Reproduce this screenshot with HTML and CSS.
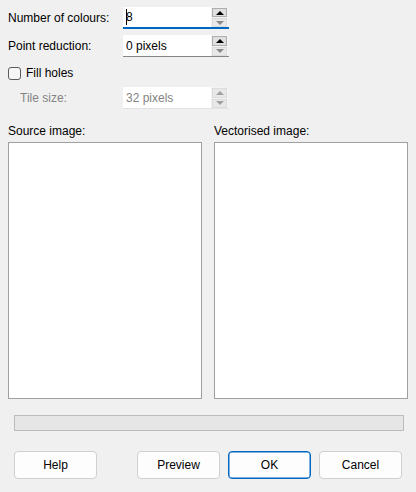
FILE: index.html
```html
<!DOCTYPE html>
<html lang="en">
<head>
    <meta charset="UTF-8">
    <title>Vectorise</title>
    <link rel="stylesheet" href="styles.css">
</head>
<body>
    <div class="dialog">
        <div class="row">
            <label class="label">Number of colours:</label>
            <div class="spin focused">
                <span class="value"><span class="caret"></span>8</span>
                <div class="arrows">
                    <span class="arrow up"></span>
                    <span class="arrow down"></span>
                </div>
            </div>
        </div>
        <div class="row">
            <label class="label">Point reduction:</label>
            <div class="spin">
                <span class="value">0 pixels</span>
                <div class="arrows">
                    <span class="arrow up"></span>
                    <span class="arrow down"></span>
                </div>
            </div>
        </div>
        <div class="check-row">
            <span class="checkbox"></span>
            <span>Fill holes</span>
        </div>
        <div class="row disabled">
            <label class="label indent">Tile size:</label>
            <div class="spin">
                <span class="value">32 pixels</span>
                <div class="arrows">
                    <span class="arrow up"></span>
                    <span class="arrow down"></span>
                </div>
            </div>
        </div>

        <div class="panels">
            <div class="panel">
                <div class="panel-title">Source image:</div>
                <div class="view"></div>
            </div>
            <div class="panel">
                <div class="panel-title">Vectorised image:</div>
                <div class="view"></div>
            </div>
        </div>

        <div class="progress"></div>

        <div class="buttons">
            <button>Help</button>
            <div class="spacer"></div>
            <button>Preview</button>
            <button class="default">OK</button>
            <button>Cancel</button>
        </div>
    </div>
</body>
</html>
```

FILE: styles.css
```css
body {
    margin: 0;
    background: #f0f0f0;
    font-family: "Liberation Sans", Arial, sans-serif;
    font-size: 12px;
    color: #000;
}
.dialog {
    width: 400px;
    padding: 7px 8px 0 8px;
}
.row {
    display: flex;
    align-items: center;
    height: 22px;
    margin-bottom: 6px;
}
.label {
    width: 115px;
}
.label.indent {
    padding-left: 12px;
    width: 103px;
}
.spin {
    display: flex;
    align-items: stretch;
    width: 106px;
    height: 22px;
    box-sizing: border-box;
    background: #fff;
    border-bottom: 1px solid #858585;
}
.spin.focused {
    border-bottom: 2px solid #0067c0;
}
.value {
    flex: 1;
    align-self: center;
    padding-left: 3px;
    position: relative;
}
.caret {
    position: absolute;
    left: 3px;
    top: -1px;
    width: 1px;
    height: 16px;
    background: #000;
}
.arrows {
    display: flex;
    flex-direction: column;
    gap: 1px;
    width: 18px;
    padding: 1px 2px 0 1px;
    box-sizing: border-box;
    background: #f3f3f3;
}
.arrow {
    flex: 1;
    position: relative;
    background: #e8e8e8;
    border: 1px solid #dcdcdc;
}
.arrow.up {
    background: #e0e0e0;
    border-color: #adadad;
}
.arrow::after {
    content: "";
    position: absolute;
    left: 50%;
    top: 50%;
    margin-left: -4px;
    border-left: 4px solid transparent;
    border-right: 4px solid transparent;
}
.arrow.up::after {
    margin-top: -2px;
    border-bottom: 4px solid #000;
}
.arrow.down::after {
    margin-top: -2px;
    border-top: 4px solid #8a8a8a;
}
.disabled {
    color: #838383;
}
.disabled .spin {
    border-bottom-color: #e2e2e2;
}
.disabled .arrow.up {
    background: #e8e8e8;
    border-color: #dcdcdc;
}
.disabled .arrow.up::after {
    border-bottom-color: #a0a0a0;
}
.disabled .arrow.down::after {
    border-top-color: #a0a0a0;
}
.check-row {
    display: flex;
    align-items: center;
    gap: 5px;
    height: 20px;
    margin: 4px 0 4px 0;
}
.checkbox {
    width: 11px;
    height: 11px;
    border: 1px solid #5a5a5a;
    border-radius: 3px;
    background: #f6f6f6;
}
.panels {
    display: flex;
    gap: 12px;
    margin-top: 15px;
}
.panel {
    flex: 1;
}
.panel-title {
    height: 15px;
    margin-bottom: 3px;
}
.view {
    height: 255px;
    background: #fff;
    border: 1px solid #a0a0a0;
}
.progress {
    height: 14px;
    margin: 16px 4px 0 6px;
    background: #e6e6e6;
    border: 1px solid #bcbcbc;
}
.buttons {
    display: flex;
    gap: 8px;
    margin: 20px 6px 0 6px;
}
.spacer {
    flex: 1;
}
button {
    width: 83px;
    height: 28px;
    font-family: inherit;
    font-size: 12px;
    color: #000;
    background: #fdfdfd;
    border: 1px solid #d0d0d0;
    border-radius: 4px;
}
button.default {
    border: 1px solid #0067c0;
    box-shadow: inset 0 0 0 0.5px #0067c0;
}
```
